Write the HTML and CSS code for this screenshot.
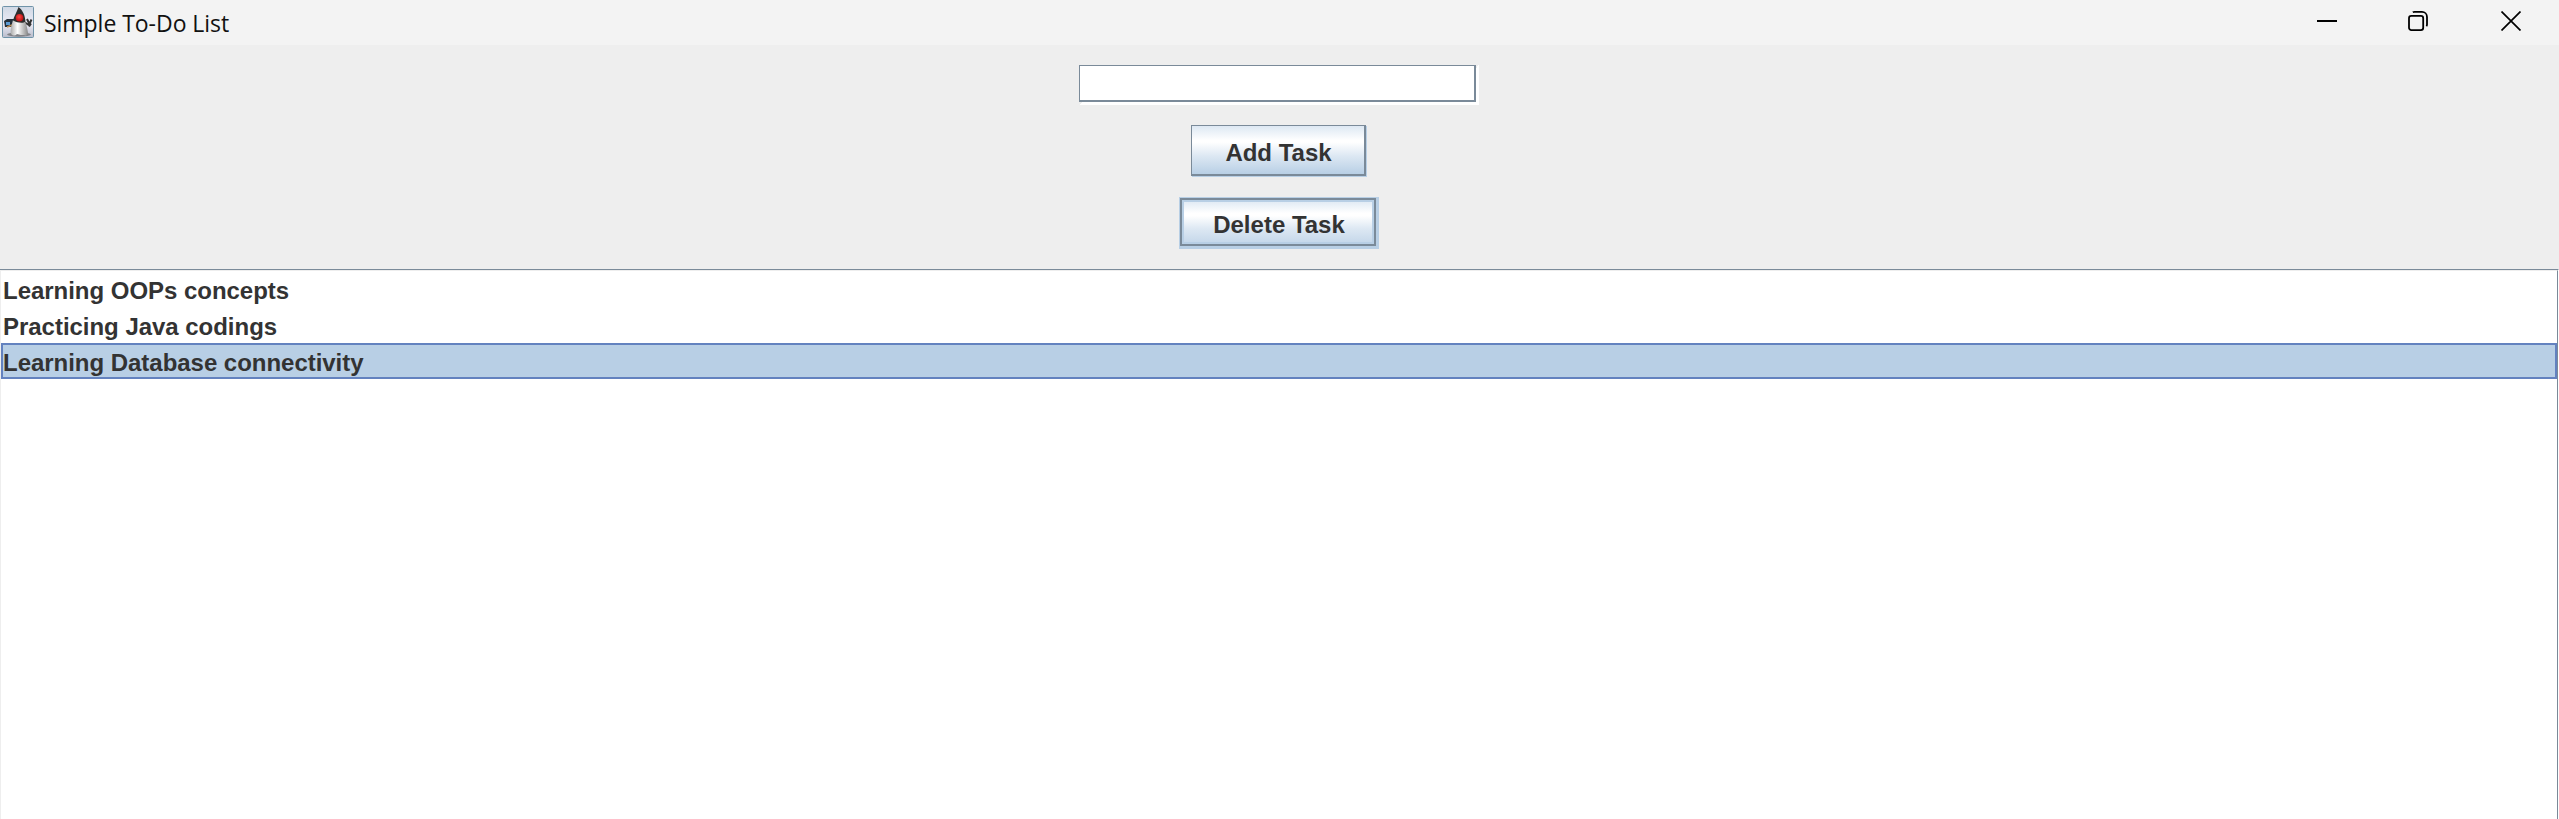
FILE: index.html
```
<!DOCTYPE html>
<html lang="en">
<head>
<meta charset="utf-8">
<title>Simple To-Do List</title>
<link rel="stylesheet" href="styles.css">
</head>
<body>
<div class="window">
  <header class="titlebar">
    <svg class="app-icon" width="32" height="32" viewBox="0 0 32 32">
      <defs>
        <linearGradient id="tile" x1="0" y1="0" x2="0" y2="1"><stop offset="0" stop-color="#cfd8e4"/><stop offset=".55" stop-color="#ececf6"/><stop offset="1" stop-color="#b9bccb"/></linearGradient>
        <linearGradient id="belly" x1="0" y1="0" x2="1" y2="0"><stop offset="0" stop-color="#aaaaaa"/><stop offset=".4" stop-color="#ffffff"/><stop offset="1" stop-color="#888888"/></linearGradient>
        <radialGradient id="nose" cx="0.45" cy="0.4" r="0.6"><stop offset="0" stop-color="#ff4a45"/><stop offset="1" stop-color="#b80c10"/></radialGradient>
      </defs>
      <rect x="0.5" y="0.5" width="31" height="31" rx="1" fill="url(#tile)" stroke="#6f93a8"/>
      <ellipse cx="17" cy="28.500" rx="12" ry="2.200" fill="#666666" opacity="0.7"/>
      <path d="M2 15l3-2h7v6l-3 2H3z" fill="#24303b"/>
      <path d="M4 16h4v3H4z" fill="#5b9bd3"/>
      <path d="M5 21l5-2" stroke="#b98a51" stroke-width="1.500"/>
      <path d="M22 16l5 3 2.500-5.500M27 20.500l2-3M25 13l2.500 5" fill="none" stroke="#333333" stroke-width="2"/>
      <path d="M11 14C9.500 19 8 25 9 28c2 2 4 2 6 0 3 1 5 1 7 1 2 1 4 0 4-2-1-6-1.500-10-4-13z" fill="url(#belly)"/>
      <path d="M16.500 1c4 3 6.500 8 7 14.500-2 2-8 1.500-12.500-1 1-4.500 4-8.500 5.500-13.500z" fill="#2d2d2d"/>
      <circle cx="17.500" cy="11.700" r="3.800" fill="url(#nose)"/>
    </svg>
    <span class="title">Simple To-Do List</span>
    <div class="controls">
      <svg width="20" height="20" viewBox="0 0 20 20"><path d="M0 10h20" stroke="#000" stroke-width="2"/></svg>
      <svg class="restore" width="20" height="20" viewBox="0 0 20 20" fill="none" stroke="#000" stroke-width="1.800"><rect x="1" y="4.900" width="14.200" height="14.200" rx="2.300"/><path d="M4.800 1.300C5.300 1 5.800.9 6.500.9H14a5 5 0 0 1 5 5v7.600c0 .7-.2 1.300-.6 1.800"/></svg>
      <svg width="20" height="20" viewBox="0 0 20 20"><path d="M.5.5l19 19M19.500.5l-19 19" stroke="#000" stroke-width="1.700"/></svg>
    </div>
  </header>
  <main class="form">
    <div class="field"><input class="input" type="text" aria-label="Task"></div>
    <button class="button add">Add Task</button>
    <button class="button delete"><span class="face">Delete Task</span></button>
  </main>
  <section class="scroll">
    <ul class="list">
      <li class="row">Learning OOPs concepts</li>
      <li class="row">Practicing Java codings</li>
      <li class="row selected">Learning Database connectivity</li>
    </ul>
  </section>
</div>
</body>
</html>
```
FILE: styles.css
```
* { box-sizing: border-box; }
body { margin: 0; background: #eee; color: #333; font-family: "Liberation Sans", Arial, sans-serif; }
.window { display: flex; flex-direction: column; height: 819px; overflow: hidden; }
.titlebar { flex: none; display: flex; align-items: flex-start; height: 45px; padding: 6px 38px 0 2px; background: #f3f3f3; }
.app-icon { flex: none; }
.title { margin-left: 10px; color: #111; font-family: "Open Sans", sans-serif; font-size: 23px; line-height: 34px; letter-spacing: -0.04px; white-space: nowrap; }
.controls { display: flex; gap: 73px; margin: 5px 0 0 auto; }
.controls svg { display: block; }
.controls .restore { margin: 0 0 0 -2px; }
.form { flex: none; display: flex; flex-direction: column; align-items: center; height: 224px; padding-top: 20px; }
.field { width: 400px; height: 40px; padding: 0 3px 3px 0; background: linear-gradient(135deg, #eee 50%, #fff 50%) 100% 0 / 3px 3px no-repeat, linear-gradient(135deg, #eee 50%, #fff 50%) 0 100% / 3px 3px no-repeat, #fff; margin-right: 1px; }
.input { display: block; width: 397px; height: 37px; padding: 0 4px; border: solid #7a8a99; border-width: 1px 2px 2px 1px; border-radius: 0; background: #fff; outline: none; font: 24px "Liberation Sans", sans-serif; }
.button { display: block; padding: 0; border: 0; border-radius: 0; color: #333; font: bold 24px/28px "Liberation Sans", Arial, sans-serif; white-space: nowrap; }
.add { width: 175px; height: 51px; margin-top: 20px; margin-right: 2px; border: solid #7a8a99; border-width: 1px 2px 2px 1px; background: linear-gradient(#dde8f3 0, #fff 30%, #fff 34%, #dde8f3 62%, #b8cfe5 100%); box-shadow: 1px 1px 0 #b8cfe5; padding: 6px 0 0 1px; }
.delete { width: 200px; height: 52px; margin-top: 21px; margin-right: 1px; padding: 1px 3px 3px 1px; background: #b8cfe5; }
.face { display: flex; align-items: center; justify-content: center; width: 196px; height: 48px; padding: 6px 0 0 2px; border: 2px solid #7a8a99; box-shadow: inset 0 0 0 2px #b8cfe5; background: linear-gradient(#dde8f3 0, #fff 30%, #fff 36%, #dde8f3 65%, #c3d6e9 100%); }
.scroll { flex: 1; border-top: 1px solid #7a8a99; border-right: 1px solid #fff; }
.list { height: 100%; margin: 0; padding: 0; list-style: none; border: solid #eee; border-width: 1px 0 0 1px; border-right: 1px solid #7a8a99; background: #fff; }
.row { height: 36px; padding: 4px 2px 0 2px; font-size: 24px; font-weight: bold; line-height: 32px; letter-spacing: -0.03px; white-space: nowrap; }
.selected { border: 2px solid #6382bf; padding: 2px 0 0 0; background: #b8cfe5; }
```
